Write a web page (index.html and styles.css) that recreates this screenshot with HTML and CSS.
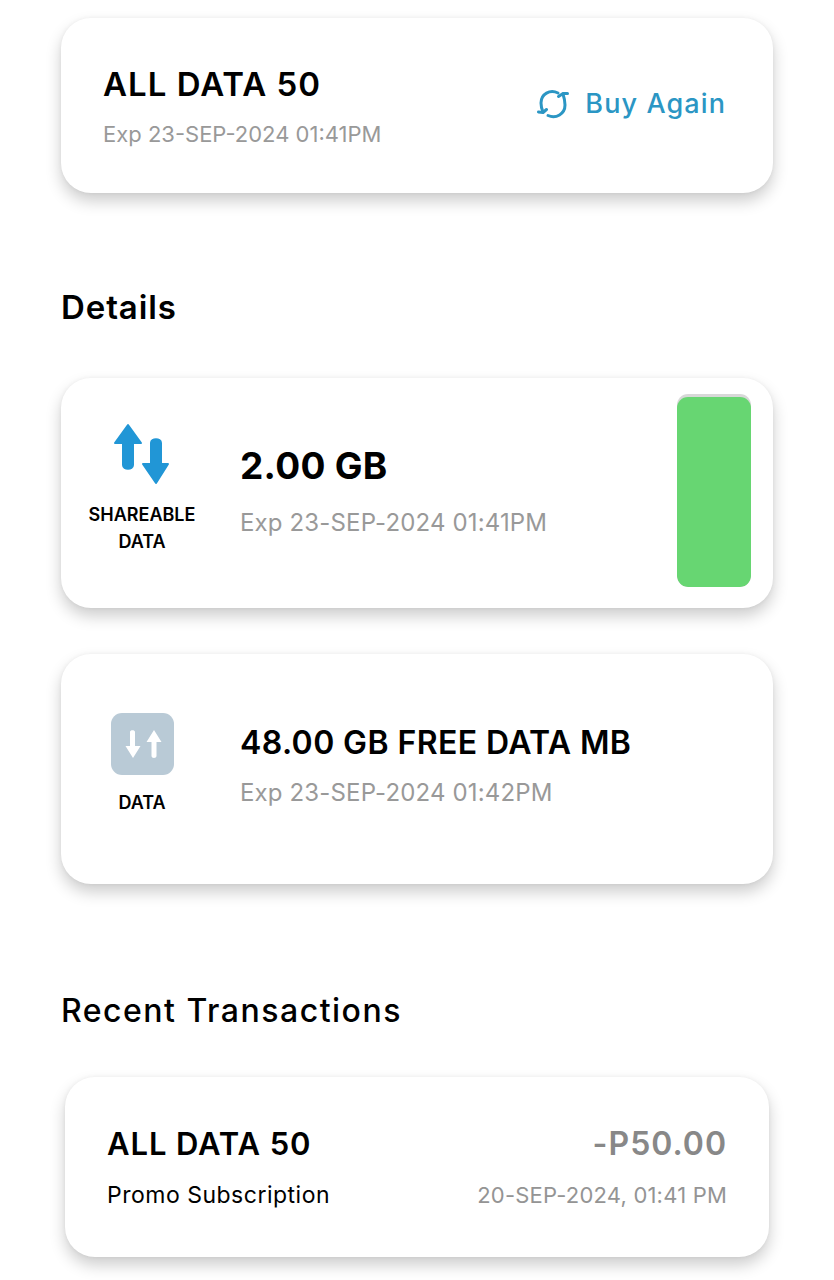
FILE: index.html
```html
<!DOCTYPE html>
<html lang="en">
<head>
  <meta charset="UTF-8">
  <title>ALL DATA 50</title>
  <link rel="stylesheet" href="styles.css">
</head>
<body>
  <section class="card promo-card">
    <div>
      <div class="promo-name">ALL DATA 50</div>
      <div class="exp exp-small">Exp 23-SEP-2024 01:41PM</div>
    </div>
    <a class="buy-again">
      <svg class="buy-icon" viewBox="0 0 32 32" fill="none" stroke="#2b96c4" stroke-width="3" stroke-linecap="round" stroke-linejoin="round">
        <path d="M21 5C13 1 4 6 4 15C4 18 4.500 20.500 6 24"/>
        <path d="M1.500 24L6 24.500L9.500 21.500"/>
        <path d="M11 27.500C19 31 28 26 28 17C28 13 27.500 10.500 26 6"/>
        <path d="M21.500 8.500L26 5.500L30.500 5.500"/>
      </svg>
      Buy Again
    </a>
  </section>

  <h2 class="section-title details-title">Details</h2>

  <section class="card data-card">
    <div class="data-type">
      <svg class="share-icon" viewBox="0 0 58 62" fill="#2196d6" stroke="#2196d6" stroke-width="2" stroke-linejoin="round">
        <path d="M15 2L28 20H20V42C20 47 10 47 10 42V20H2Z"/>
        <path d="M43 60L55 41H48V20C48 15 38 15 38 20V41H30Z"/>
      </svg>
      <div class="type-label">SHAREABLE<br>DATA</div>
    </div>
    <div class="data-info">
      <div class="amount">2.00 GB</div>
      <div class="exp">Exp 23-SEP-2024 01:41PM</div>
    </div>
    <div class="meter"><div class="meter-fill"></div></div>
  </section>

  <section class="card data-card free-card">
    <div class="data-type">
      <div class="data-tile">
        <svg class="tile-icon" viewBox="0 0 63 62" fill="#fff">
          <path d="M19 19C19 16.500 24 16.500 24 19V33H29.500L22 45L14.500 33H19Z"/>
          <path d="M43 17L50.500 29H45.500V43C45.500 45.500 40.500 45.500 40.500 43V29H35.500Z"/>
        </svg>
      </div>
      <div class="type-label">DATA</div>
    </div>
    <div class="data-info data-info-free">
      <div class="amount amount-free">48.00 GB FREE DATA MB</div>
      <div class="exp">Exp 23-SEP-2024 01:42PM</div>
    </div>
  </section>

  <h2 class="section-title recent-title">Recent Transactions</h2>

  <section class="card txn-card">
    <div class="txn-row">
      <div class="txn-name">ALL DATA 50</div>
      <div class="txn-price">-P50.00</div>
    </div>
    <div class="txn-row txn-row-sub">
      <div class="txn-kind">Promo Subscription</div>
      <div class="txn-date">20-SEP-2024, 01:41 PM</div>
    </div>
  </section>
</body>
</html>
```

FILE: styles.css
```css
html, body {
  margin: 0;
  height: 1280px;
  overflow: hidden;
}

body {
  font-family: Inter, "Noto Sans", sans-serif;
  background-color: #fff;
  color: #000;
  padding: 18px 61px 0;
  box-sizing: border-box;
}

.card {
  background-color: #fff;
  border-radius: 30px;
  box-shadow: 0 8px 16px rgba(0, 0, 0, 0.2), 0 0 4px rgba(0, 0, 0, 0.05);
  display: flex;
  align-items: center;
  box-sizing: border-box;
}

.promo-card {
  height: 175px;
  padding: 0 47px 0 42px;
  justify-content: space-between;
}

.promo-name {
  font-size: 33px;
  font-weight: 600;
  line-height: 40px;
  letter-spacing: 1px;
  margin-bottom: 17px;
}

.exp {
  font-size: 24px;
  line-height: 30px;
  letter-spacing: 0.15px;
  color: #999;
}

.exp-small {
  font-size: 22px;
  line-height: 26px;
  letter-spacing: 0;
  margin-bottom: 1px;
}

.buy-again {
  display: flex;
  align-items: center;
  gap: 16px;
  font-size: 27px;
  font-weight: 500;
  color: #2b96c4;
  letter-spacing: 1.1px;
  margin-bottom: 4px;
}

.buy-icon {
  width: 32px;
  height: 32px;
}

.section-title {
  font-size: 32px;
  line-height: 40px;
  font-weight: 500;
  margin: 0;
  letter-spacing: 1.5px;
}

.details-title {
  font-size: 33px;
  font-weight: 600;
  letter-spacing: 0.9px;
  margin-top: 94px;
  margin-bottom: 51px;
}

.recent-title {
  margin-top: 107px;
  margin-bottom: 46px;
}

.data-card {
  height: 230px;
  position: relative;
}

.free-card {
  margin-top: 46px;
}

.data-type {
  width: 162px;
  flex: none;
  display: flex;
  flex-direction: column;
  align-items: center;
  padding-bottom: 10px;
}

.share-icon {
  width: 58px;
  height: 62px;
  margin-top: 2px;
  margin-bottom: 16px;
}

.type-label {
  font-size: 18px;
  line-height: 27px;
  font-weight: 600;
  text-align: center;
}

.data-tile {
  width: 63px;
  height: 62px;
  border-radius: 11px;
  background-color: #b9cad6;
  margin-bottom: 14px;
}

.tile-icon {
  display: block;
  width: 63px;
  height: 62px;
}

.data-info {
  margin-left: 17px;
  padding-bottom: 4px;
}

.data-info-free {
  padding-bottom: 7px;
}

.amount {
  font-size: 37px;
  font-weight: 700;
  line-height: 44px;
  letter-spacing: 0.3px;
  margin-bottom: 20px;
}

.amount-free {
  font-size: 32px;
  font-weight: 600;
  line-height: 40px;
  letter-spacing: 0.4px;
  margin-bottom: 15px;
}

.meter {
  position: absolute;
  top: 16px;
  right: 22px;
  width: 74px;
  height: 193px;
  border-radius: 11px;
  background-color: #d8d8d8;
  overflow: hidden;
  display: flex;
  align-items: flex-end;
}

.meter-fill {
  width: 100%;
  height: 190px;
  border-radius: 11px;
  background-color: #67d672;
}

.txn-card {
  height: 180px;
  margin: 0 4px;
  padding: 47px 42px 0;
  display: block;
}

.txn-row {
  display: flex;
  justify-content: space-between;
  align-items: center;
}

.txn-row-sub {
  margin-top: 17px;
}

.txn-name {
  font-size: 31px;
  font-weight: 600;
  line-height: 40px;
  letter-spacing: 0.9px;
}

.txn-price {
  font-size: 32px;
  font-weight: 600;
  line-height: 40px;
  letter-spacing: 1px;
  color: #888;
}

.txn-kind {
  font-size: 23px;
  line-height: 28px;
  letter-spacing: 0.5px;
}

.txn-date {
  font-size: 22px;
  line-height: 28px;
  letter-spacing: 0.2px;
  color: #949494;
}
```
